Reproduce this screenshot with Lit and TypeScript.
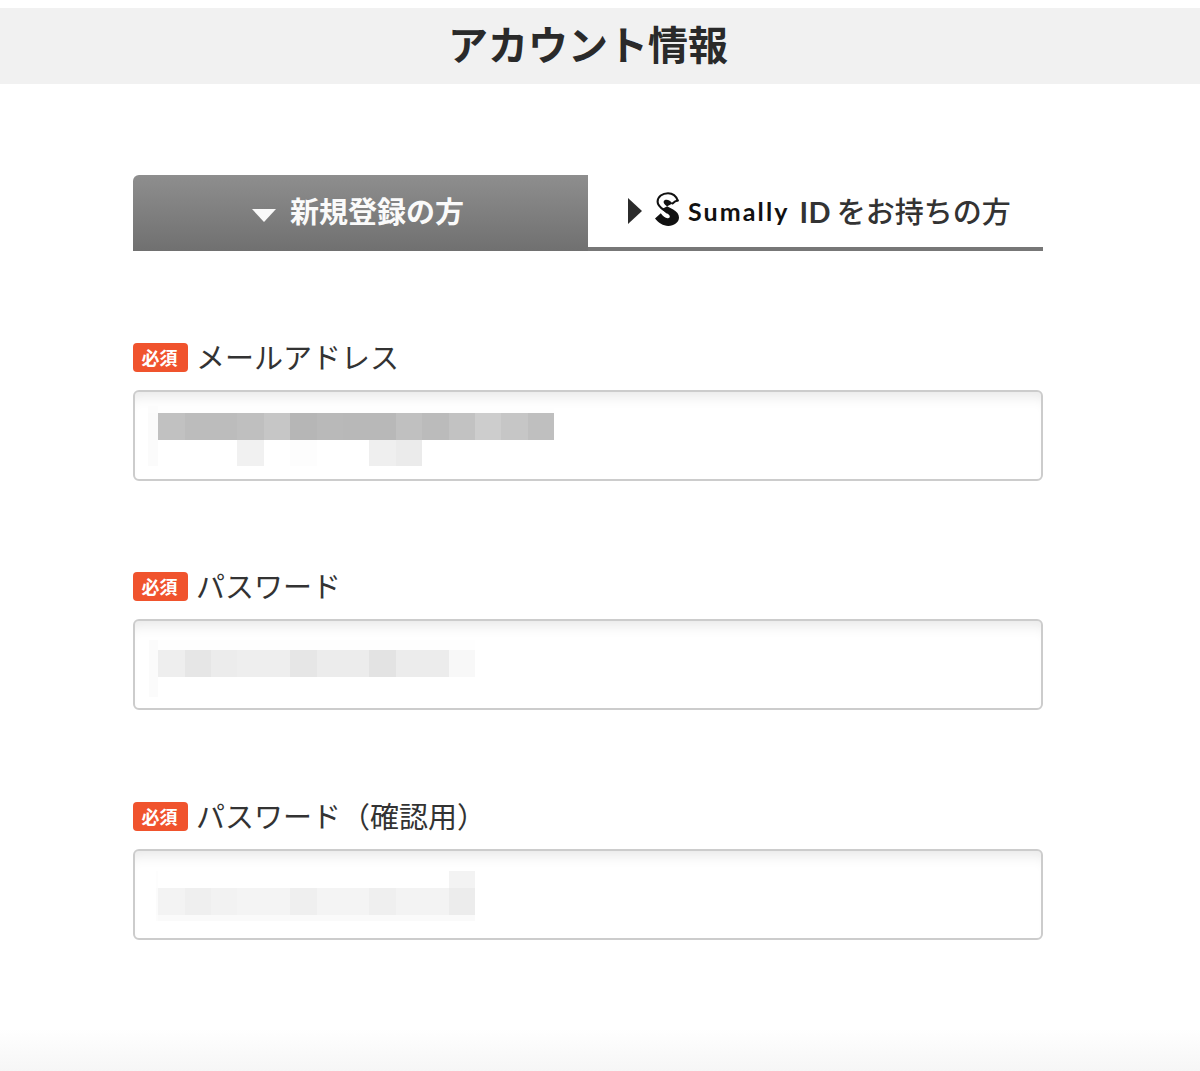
import { LitElement, html, css } from "lit";
import { customElement } from "lit/decorators.js";

type Row = { h: number; left: string; cells: string[] };
type Field = { label: string; top: number; leftW: number; rows: Row[] };

const n = (count: number, c = "#fff") => Array.from({ length: count }, () => c);

const FIELDS: Field[] = [
  {
    label: "メールアドレス",
    top: 14,
    leftW: 10,
    rows: [
      { h: 7, left: "#fcfcfc", cells: n(15, "#fefefe") },
      { h: 26.5, left: "#fbfbfb", cells: ["#c1c1c1", "#bcbcbc", "#bcbcbc", "#bfbfbf", "#c6c6c6", "#b6b6b6", "#b9b9b9", "#b8b8b8", "#b8b8b8", "#c0c0c0", "#bbbbbb", "#c2c2c2", "#cdcdcd", "#c6c6c6", "#bfbfbf"] },
      { h: 26.5, left: "#fbfbfb", cells: ["#fff", "#fff", "#fff", "#f1f1f1", "#fff", "#fdfdfd", "#fff", "#fff", "#efefef", "#ebebeb", "#fff", "#fff", "#fff", "#fff", "#fff"] },
    ],
  },
  {
    label: "パスワード",
    top: 19,
    leftW: 9,
    rows: [
      { h: 10, left: "#fbfbfb", cells: n(12, "#fefefe") },
      { h: 27, left: "#fbfbfb", cells: ["#eeeeee", "#e6e6e6", "#ececec", "#eeeeee", "#eeeeee", "#e6e6e6", "#ececec", "#ececec", "#e3e3e3", "#ececec", "#ececec", "#f8f8f8"] },
      { h: 20, left: "#fbfbfb", cells: n(12) },
    ],
  },
  {
    label: "パスワード（確認用）",
    top: 20,
    leftW: 2,
    rows: [
      { h: 17, left: "#fdfdfd", cells: [...n(11, "#fff"), "#f3f3f3"] },
      { h: 26.5, left: "#fbfbfb", cells: ["#f3f3f3", "#efefef", "#f2f2f2", "#f4f4f4", "#f4f4f4", "#efefef", "#f4f4f4", "#f4f4f4", "#efefef", "#f3f3f3", "#f3f3f3", "#ececec"] },
      { h: 6, left: "#fcfcfc", cells: n(12, "#fafafa") },
    ],
  },
];

@customElement("app-root")
export class AppRoot extends LitElement {
  static styles = css`
    :host {
      display: block;
      font-family: "Noto Sans CJK JP", "Liberation Sans", sans-serif;
      color: #333;
    }
    .page {
      min-height: 1071px;
      display: flex;
      flex-direction: column;
      padding-top: 8px;
      box-sizing: border-box;
      background: #fff;
    }
    .head {
      height: 76px;
      background: #f1f1f1;
      display: flex;
      align-items: center;
      justify-content: center;
      padding-right: 24px;
    }
    h1 {
      margin: 0 0 7px;
      font-size: 40px;
      font-weight: 700;
      line-height: 1;
      color: #2a2a2a;
    }
    .main {
      width: 910px;
      margin: 91px 0 0 133px;
    }
    .tabs {
      display: flex;
      height: 76px;
    }
    .tab {
      width: 455px;
      box-sizing: border-box;
      display: flex;
      align-items: center;
      font-size: 29px;
      font-weight: 500;
      line-height: 1;
    }
    .tab.on {
      background: linear-gradient(#8e8e8e, #707070);
      color: #fafafa;
      border-radius: 6px 0 0 0;
      padding-left: 119px;
      gap: 14px;
    }
    .tab.on span {
      font-weight: 700;
      margin-bottom: 6px;
    }
    .tab.off {
      border-bottom: 4px solid #777;
      padding-left: 40px;
      color: #333;
      font-weight: 500;
    }
    .tab.off .jp {
      margin-bottom: 2px;
    }
    .down {
      display: block;
      margin-top: 5px;
    }
    .right {
      display: block;
      margin-right: 14px;
    }
    .logo {
      display: block;
      margin: -4px 8px 0 -1px;
    }
    .brand {
      font-family: "Lato", sans-serif;
      font-size: 25px;
      font-weight: 700;
      letter-spacing: 2.1px;
      color: #111;
      margin: 0 10px 0 1px;
    }
    .id {
      font-family: "Lato", sans-serif;
      font-size: 29px;
      font-weight: 700;
      letter-spacing: 0.3px;
      margin-right: 6px;
      color: #333;
    }
    .fields {
      display: flex;
      flex-direction: column;
      gap: 91px;
      margin-top: 92px;
    }
    section:last-child {
      margin-top: 1px;
    }
    .lab {
      display: flex;
      align-items: center;
      gap: 8px;
      height: 29px;
      margin-bottom: 18px;
    }
    .badge {
      width: 55px;
      height: 29px;
      box-sizing: border-box;
      padding-right: 2px;
      background: #f0532d;
      border-radius: 4px;
      color: #fff;
      font-size: 18px;
      font-weight: 700;
      line-height: 29px;
      text-align: center;
    }
    .text {
      font-size: 29px;
      font-weight: 400;
      line-height: 29px;
      color: #333;
      margin-bottom: 2px;
    }
    .box {
      height: 91px;
      box-sizing: border-box;
      border: 2px solid #cccccc;
      border-radius: 6px;
      background: #fff;
      box-shadow: inset 0 14px 14px -10px rgba(0, 0, 0, 0.1);
      overflow: hidden;
    }
    .row {
      display: flex;
    }
    .cell {
      width: 26.4px;
      flex: none;
    }
    .foot {
      margin-top: auto;
      height: 42px;
      background: linear-gradient(#fff, #f6f6f6);
    }
  `;

  private logo() {
    return html`<svg class="logo" width="24" height="34" viewBox="0 0 24 34">
      <path d="M22.7 8.5C21 3.5 17.5 1.2 13 1.2 7.5 1.2 2.6 4.5 2.6 9.8c0 4 3 6 6.4 8.2l3 2.5" fill="#fff" stroke="#111" stroke-width="2.1" stroke-linecap="round" />
      <path d="M22.7 8.5c-2 .2-3.7 1.5-5.2 3" fill="none" stroke="#111" stroke-width="2.1" stroke-linecap="round" />
      <path d="M17.5 11.5C15.5 8.6 12 6.8 9.6 8.2 7.6 9.5 9 12.2 11.6 14l6.6 3.6c3.7 2.3 5.8 4.6 5.8 8C24 30.500 19 34 13.300 34 8 34 3.500 31 0 26.600l5.800-5.300c2 2.800 4.500 5 6.700 5 1.900 0 3-1.500 1.800-3.100-1-1.500-2.900-2.500-5.300-4.200L7 17" fill="#111" />
    </svg>`;
  }

  private mosaic(f: Field) {
    return html`<div class="box" style="padding:${f.top}px 0 0 ${23.3 - f.leftW}px">
      ${f.rows.map(
        (r) => html`<div class="row" style="height:${r.h}px">
          <div style="width:${f.leftW}px;background:${r.left}"></div>
          ${r.cells.map((c) => html`<div class="cell" style="background:${c}"></div>`)}
        </div>`,
      )}
    </div>`;
  }

  render() {
    return html`<div class="page">
      <header class="head"><h1>アカウント情報</h1></header>
      <main class="main">
        <div class="tabs">
          <div class="tab on">
            <svg class="down" width="24" height="13" viewBox="0 0 24 13"><path d="M0 0h24L12 13z" fill="#fafafa" /></svg>
            <span>新規登録の方</span>
          </div>
          <div class="tab off">
            <svg class="right" width="14" height="26" viewBox="0 0 14 26"><path d="M0 0l14 13L0 26z" fill="#2b2b2b" /></svg>
            ${this.logo()}
            <span class="brand">Sumally</span><span class="id">ID</span><span class="jp">をお持ちの方</span>
          </div>
        </div>
        <div class="fields">
          ${FIELDS.map(
            (f) => html`<section>
              <div class="lab"><span class="badge">必須</span><span class="text">${f.label}</span></div>
              ${this.mosaic(f)}
            </section>`,
          )}
        </div>
      </main>
      <div class="foot"></div>
    </div>`;
  }
}
